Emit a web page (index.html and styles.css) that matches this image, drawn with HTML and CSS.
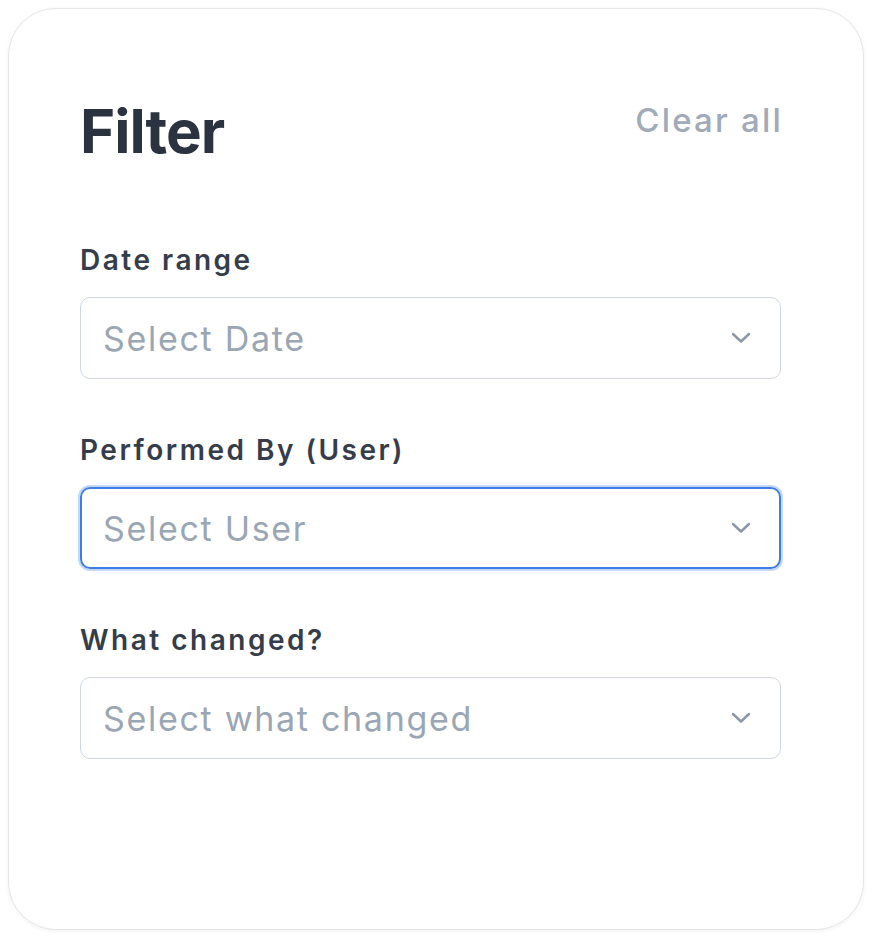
FILE: index.html
```html
<!DOCTYPE html>
<html lang="en">
<head>
<meta charset="utf-8">
<title>Filter</title>
<link rel="stylesheet" href="styles.css">
</head>
<body>
<div class="card">
  <div class="header">
    <h1 class="title">Filter</h1>
    <a class="clear">Clear all</a>
  </div>
  <div class="fields">
    <div class="field">
      <label class="label">Date range</label>
      <div class="select">
        <span class="placeholder">Select Date</span>
        <svg class="chev" width="20" height="12" viewBox="0 0 20 12"><path d="M2 2 L10 9.5 L18 2" fill="none" stroke="#8a96a8" stroke-width="2.4" stroke-linecap="round" stroke-linejoin="round"/></svg>
      </div>
    </div>
    <div class="field">
      <label class="label">Performed By (User)</label>
      <div class="select focused">
        <span class="placeholder">Select User</span>
        <svg class="chev" width="20" height="12" viewBox="0 0 20 12"><path d="M2 2 L10 9.5 L18 2" fill="none" stroke="#8a96a8" stroke-width="2.4" stroke-linecap="round" stroke-linejoin="round"/></svg>
      </div>
    </div>
    <div class="field">
      <label class="label">What changed?</label>
      <div class="select">
        <span class="placeholder">Select what changed</span>
        <svg class="chev" width="20" height="12" viewBox="0 0 20 12"><path d="M2 2 L10 9.5 L18 2" fill="none" stroke="#8a96a8" stroke-width="2.4" stroke-linecap="round" stroke-linejoin="round"/></svg>
      </div>
    </div>
  </div>
</div>
</body>
</html>
```
FILE: styles.css
```css
html, body {
  margin: 0;
  padding: 0;
  background: #ffffff;
}
body {
  padding: 8px;
  font-family: Inter, "Noto Sans", "Liberation Sans", sans-serif;
}
.card {
  box-sizing: border-box;
  width: 856px;
  height: 922px;
  border: 1px solid #e6e6e6;
  border-radius: 48px;
  box-shadow: 0 1px 4px rgba(0, 0, 0, 0.06);
  padding: 86px 82px 0 71px;
  background: #fff;
}
.header {
  display: flex;
  justify-content: space-between;
  align-items: flex-start;
}
.title {
  margin: 0;
  font-size: 60px;
  line-height: 72px;
  font-weight: 700;
  color: #2b3340;
  letter-spacing: -1px;
}
.clear {
  margin-top: 6px;
  margin-right: -2px;
  font-size: 33px;
  line-height: 38px;
  color: #a0aab8;
  font-weight: 500;
  letter-spacing: 2.2px;
}
.fields {
  margin-top: 73px;
  display: flex;
  flex-direction: column;
  gap: 51px;
}
.field {
  display: flex;
  flex-direction: column;
  gap: 17px;
}
.label {
  font-size: 28px;
  line-height: 40px;
  font-weight: 600;
  color: #353d4a;
  letter-spacing: 2.5px;
}
.select {
  box-sizing: border-box;
  height: 82px;
  border: 1px solid #cfd6df;
  border-radius: 10px;
  display: flex;
  align-items: center;
  justify-content: space-between;
  padding: 0 29px 0 22px;
}
.select.focused {
  border: 2px solid #3f7de6;
  box-shadow: 0 0 0 2px rgba(63, 125, 230, 0.3);
  padding: 0 28px 0 21px;
}
.placeholder {
  font-size: 34px;
  color: #9ba6b5;
  letter-spacing: 1.7px;
}
.chev {
  display: block;
}
```
